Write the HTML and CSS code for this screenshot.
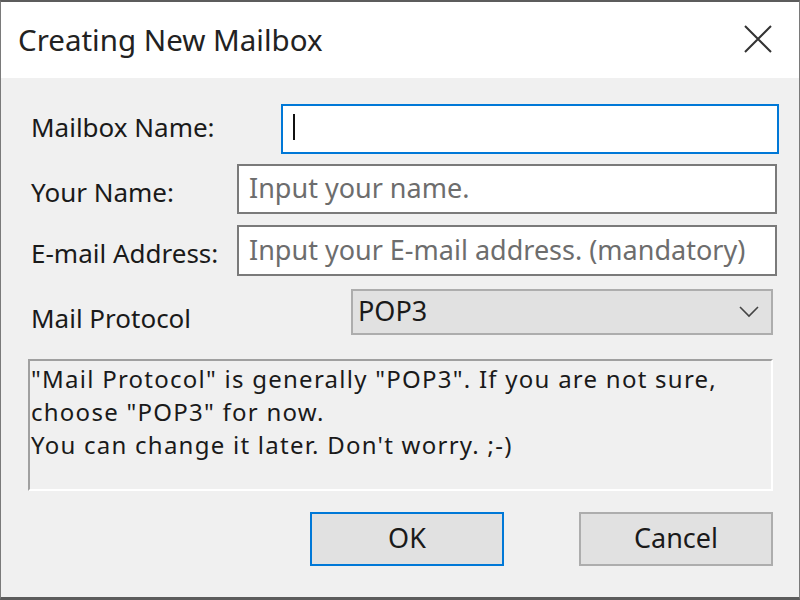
FILE: index.html
```html
<!DOCTYPE html>
<html lang="en">
<head>
  <meta charset="UTF-8">
  <title>Creating New Mailbox</title>
  <link rel="stylesheet" href="styles.css">
</head>
<body>
<div class="Dialog">
  <div class="Dialog__TitleBar">
    <div class="Dialog__Title">Creating New Mailbox</div>
    <div class="Dialog__Close">
      <svg width="30" height="30" viewBox="0 0 30 30">
        <path d="M2 2 L28 28 M28 2 L2 28" stroke="#333" stroke-width="2" fill="none"/>
      </svg>
    </div>
  </div>
  <div class="Dialog__Body">
    <div class="Row Row--Mailbox">
      <label class="Row__Label">Mailbox Name:</label>
      <div class="Field Field--Focused"><span class="Field__Caret"></span></div>
    </div>
    <div class="Row Row--Name">
      <label class="Row__Label">Your Name:</label>
      <div class="Field"><span class="Field__Placeholder">Input your name.</span></div>
    </div>
    <div class="Row Row--Email">
      <label class="Row__Label">E-mail Address:</label>
      <div class="Field"><span class="Field__Placeholder">Input your E-mail address. (mandatory)</span></div>
    </div>
    <div class="Row Row--Protocol">
      <label class="Row__Label">Mail Protocol</label>
      <div class="Select">
        <span>POP3</span>
        <svg width="20" height="12" viewBox="0 0 20 12">
          <path d="M1 1 L10 10 L19 1" stroke="#444" stroke-width="1.6" fill="none"/>
        </svg>
      </div>
    </div>
    <div class="Info">
      <div class="Info__Line">"Mail Protocol" is generally "POP3". If you are not sure,</div>
      <div class="Info__Line">choose "POP3" for now.</div>
      <div class="Info__Line">You can change it later. Don't worry. ;-)</div>
    </div>
    <div class="Buttons">
      <div class="Button Button--Default">OK</div>
      <div class="Button">Cancel</div>
    </div>
  </div>
</div>
</body>
</html>
```

FILE: styles.css
```css
html, body {
  margin: 0;
  padding: 0;
  height: 100%;
  font-family: "Noto Sans", "Open Sans", Arial, sans-serif;
  color: #1a1a1a;
}

.Dialog {
  box-sizing: border-box;
  height: 600px;
  width: 800px;
  border: 1px solid #7a7a7a;
  border-top: 2px solid #5c5c5c;
  border-bottom: 3px solid #5c5c5c;
  background-color: #f0f0f0;
  display: flex;
  flex-direction: column;
}

.Dialog__TitleBar {
  height: 76px;
  background-color: #ffffff;
  display: flex;
  align-items: center;
  justify-content: space-between;
  padding: 0 26px 0 17px;
}

.Dialog__Title {
  font-size: 29.5px;
  color: #222;
  padding-bottom: 2px;
}

.Dialog__Close {
  display: flex;
  padding-bottom: 2px;
}

.Dialog__Body {
  flex: 1;
  padding: 26px 26px 0 30px;
  font-size: 27px;
}

.Row {
  display: flex;
  align-items: center;
}

.Row__Label {
  flex: none;
  font-size: 26px;
  line-height: 30px;
}

.Row--Mailbox .Row__Label {
  width: 250px;
  padding-bottom: 4px;
}

.Row--Name {
  margin-top: 10px;
}

.Row--Email {
  margin-top: 11px;
}

.Row--Name .Row__Label,
.Row--Email .Row__Label {
  width: 206px;
  padding-top: 6px;
}

.Row--Email .Row__Label {
  padding-top: 4px;
}

.Row--Protocol {
  margin-top: 13px;
}

.Row--Protocol .Row__Label {
  width: 320px;
  padding-top: 12px;
}

.Field {
  box-sizing: border-box;
  height: 50px;
  flex: 1;
  margin-right: -4px;
  background-color: #ffffff;
  border: 2px solid #7a7a7a;
  display: flex;
  align-items: center;
  padding-left: 10px;
}

.Row--Mailbox .Field {
  margin-right: -6px;
}

.Row--Email .Field {
  height: 51px;
}

.Field--Focused {
  border-color: #0078d7;
}

.Field__Caret {
  width: 2px;
  height: 26px;
  background-color: #111;
  margin-bottom: 4px;
}

.Field__Placeholder {
  color: #6d6d6d;
  padding-bottom: 3px;
}

.Select {
  box-sizing: border-box;
  height: 46px;
  flex: 1;
  background-color: #e1e1e1;
  border: 2px solid #adadad;
  display: flex;
  align-items: center;
  justify-content: space-between;
  padding: 0 12px 0 5px;
}

.Select span {
  padding-bottom: 3px;
}

.Info {
  box-sizing: border-box;
  height: 132px;
  margin: 24px 0 0 -3px;
  border: 2px solid #a0a0a0;
  border-right-color: #ffffff;
  border-bottom-color: #ffffff;
  padding: 1px 0 0 1px;
  font-size: 24px;
  letter-spacing: 1.25px;
}

.Info__Line {
  line-height: 33px;
  white-space: nowrap;
}

.Buttons {
  display: flex;
  justify-content: flex-end;
  gap: 75px;
  margin-top: 21px;
}

.Button {
  box-sizing: border-box;
  width: 194px;
  height: 54px;
  background-color: #e1e1e1;
  border: 2px solid #adadad;
  display: flex;
  align-items: center;
  justify-content: center;
  padding-bottom: 3px;
}

.Button--Default {
  border-color: #0078d7;
}
```
